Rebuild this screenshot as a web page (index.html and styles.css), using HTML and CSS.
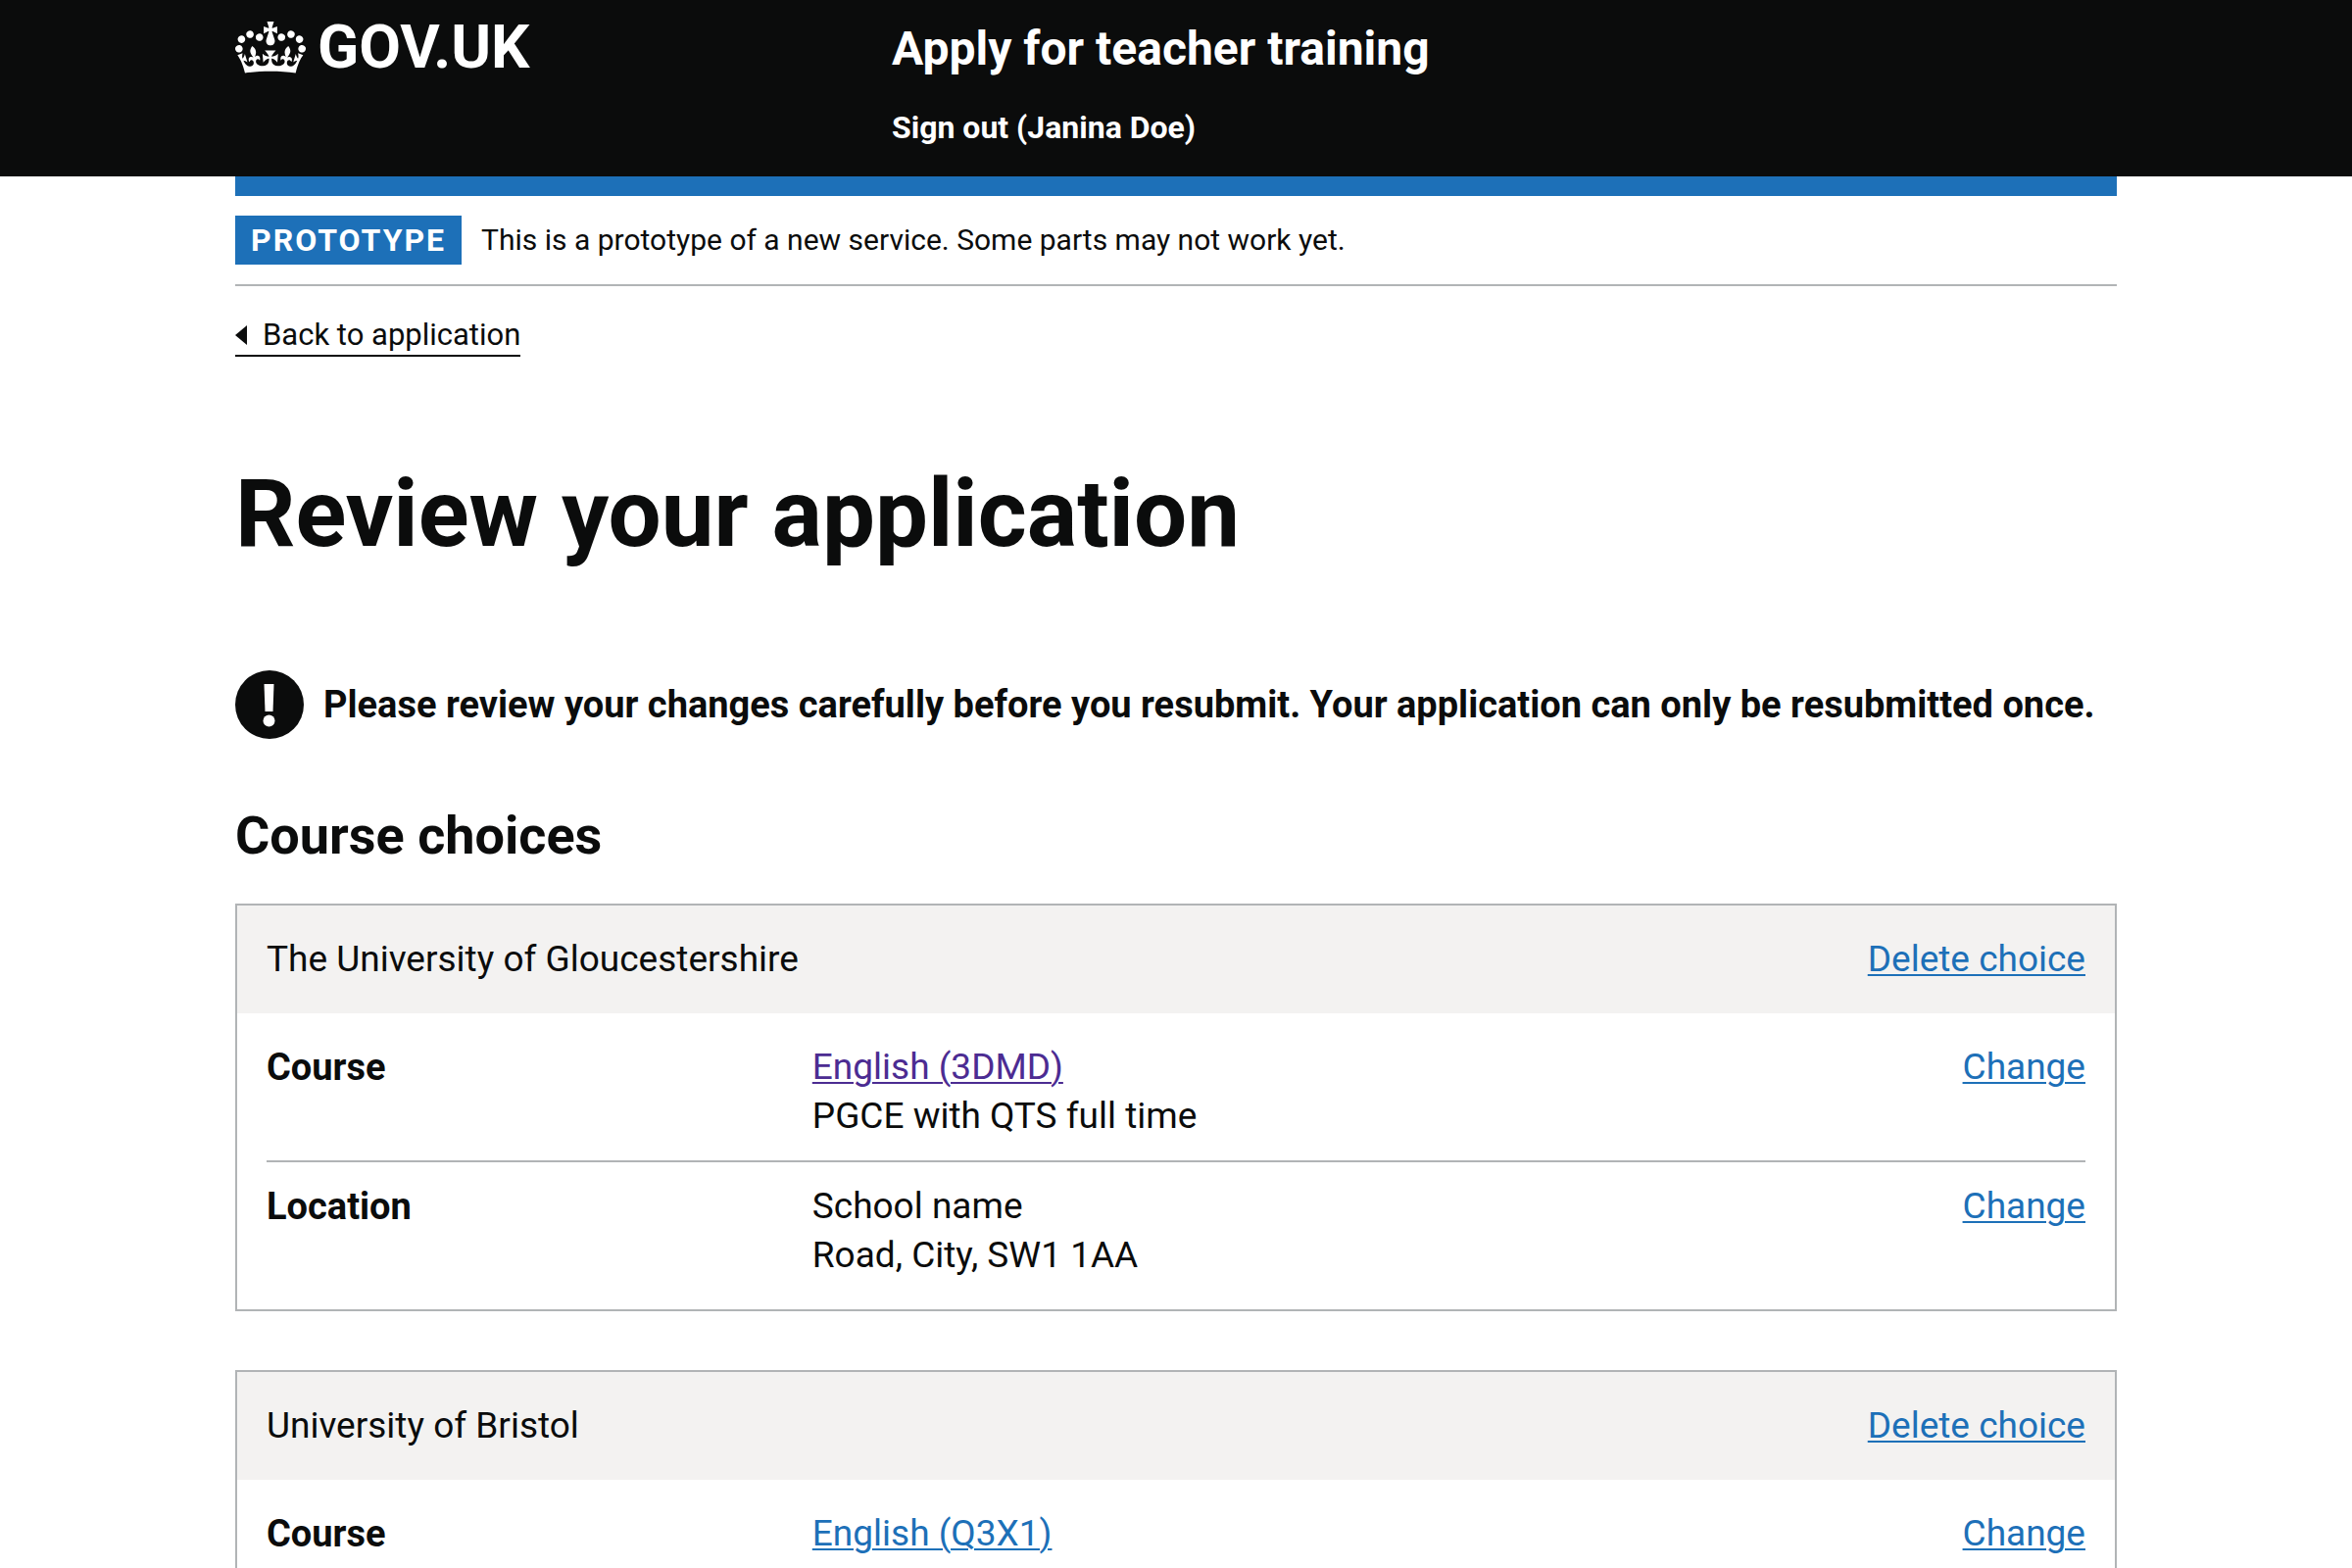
FILE: index.html
```html
<!DOCTYPE html>
<html lang="en">
<head>
  <meta charset="utf-8">
  <meta name="viewport" content="width=device-width, initial-scale=1">
  <title>Review your application – Apply for teacher training – GOV.UK</title>
  <link rel="stylesheet" href="styles.css">
</head>
<body>
  <header class="header">
    <div class="container header-grid">
      <a class="logo" href="#">
        <svg class="crown" viewBox="0 0 132 97" aria-hidden="true" focusable="false">
          <path fill="currentColor" fill-rule="evenodd" d="M25 30.2c3.5 1.5 7.7-.2 9.1-3.7 1.5-3.6-.2-7.8-3.9-9.2-3.6-1.4-7.6.3-9.1 3.9-1.4 3.5.3 7.5 3.9 9zM9 39.5c3.6 1.5 7.8-.2 9.2-3.7 1.5-3.6-.2-7.8-3.9-9.1-3.6-1.5-7.6.2-9.1 3.8-1.4 3.5.3 7.5 3.8 9zM4.4 57.2c3.5 1.5 7.7-.2 9.1-3.8 1.5-3.6-.2-7.7-3.9-9.1-3.5-1.5-7.6.3-9.1 3.8-1.4 3.5.3 7.6 3.9 9.1zm38.3-21.4c3.5 1.5 7.7-.2 9.1-3.8 1.5-3.6-.2-7.7-3.9-9.1-3.6-1.5-7.6.3-9.1 3.8-1.3 3.6.4 7.7 3.9 9.1zm64.4-5.6c-3.6 1.5-7.8-.2-9.1-3.7-1.5-3.6.2-7.8 3.8-9.2 3.6-1.4 7.7.3 9.2 3.9 1.3 3.5-.4 7.5-3.9 9zm15.9 9.3c-3.6 1.5-7.7-.2-9.1-3.7-1.5-3.6.2-7.8 3.7-9.1 3.6-1.5 7.7.2 9.2 3.8 1.5 3.5-.3 7.5-3.8 9zm4.7 17.7c-3.6 1.5-7.8-.2-9.2-3.8-1.5-3.6.2-7.7 3.9-9.1 3.6-1.5 7.7.3 9.2 3.8 1.3 3.5-.4 7.6-3.9 9.1zM89.3 35.8c-3.6 1.5-7.8-.2-9.2-3.8-1.4-3.6.2-7.7 3.9-9.1 3.6-1.5 7.7.3 9.2 3.8 1.4 3.6-.3 7.7-3.9 9.1zM69.7 17.7l8.9 4.7V9.3l-8.9 2.8c-.2-.3-.5-.6-.9-.9L72.4 0H59.6l3.5 11.2c-.3.3-.6.5-.9.9l-8.8-2.8v13.1l8.8-4.7c.3.3.6.7.9.9l-5 15.4v.1c-.2.8-.4 1.6-.4 2.4 0 4.1 3.1 7.5 7 8.1h.2c.3 0 .7.1 1 .1.4 0 .7 0 1-.1h.2c4-.6 7.1-4.1 7.1-8.1 0-.8-.1-1.7-.4-2.4V34l-5.1-15.4c.4-.2.7-.6 1-.9zM66 92.8c16.9 0 32.8 1.1 47.1 3.2 4-16.9 8.9-26.7 14-33.5l-9.6-3.4c1 4.9 1.1 7.2 0 10.2-1.5-1.4-3-4.3-4.2-8.7L108.6 76c2.8-2 5-3.2 7.5-3.3-4.4 9.4-10 11.9-13.6 11.2-4.3-.8-6.3-4.6-5.6-7.9 1-4.7 5.7-5.9 8-.5 4.3-8.7-3-11.4-7.6-8.8 7.1-7.2 7.9-13.5 2.1-21.1-8 6.1-8.1 12.3-4.5 20.8-4.7-5.4-12.1-2.5-9.5 6.2 3.4-5.2 7.9-2 7.2 3.1-.6 4.3-6.4 7.8-13.5 7.2-10.3-.9-10.9-8-11.2-13.8 2.5-.5 7.1 1.8 11 7.3L80.2 60c-4.1 4.4-8 5.3-12.3 5.4 1.4-4.4 8-11.6 8-11.6H55.5s6.4 7.2 7.9 11.6c-4.2-.1-8-1-12.3-5.4l1.4 16.4c3.9-5.5 8.5-7.7 10.9-7.3-.3 5.8-.9 12.8-11.1 13.8-7.2.6-12.9-2.9-13.5-7.2-.7-5 3.8-8.3 7.1-3.1 2.7-8.7-4.6-11.6-9.4-6.2 3.7-8.5 3.6-14.7-4.6-20.8-5.8 7.6-5 13.9 2.2 21.1-4.7-2.6-11.9.1-7.7 8.8 2.3-5.5 7.1-4.2 8.1.5.7 3.3-1.3 7.1-5.7 7.9-3.5.7-9-1.8-13.5-11.2 2.5.1 4.7 1.3 7.5 3.3l-4.7-15.4c-1.2 4.4-2.7 7.2-4.3 8.7-1.1-3-.9-5.3 0-10.2l-9.5 3.4c5 6.9 9.9 16.7 14 33.5 14.8-2.1 30.8-3.2 47.7-3.2z"/>
        </svg>
        <span class="logo-text">GOV.UK</span>
      </a>
      <div class="header-content">
        <a class="service-name" href="#">Apply for teacher training</a>
        <nav aria-label="Account">
          <a class="nav-link" href="#">Sign out (Janina Doe)</a>
        </nav>
      </div>
    </div>
  </header>

  <div class="container">
    <div class="phase-banner">
      <strong class="tag">Prototype</strong>
      <span>This is a prototype of a new service. Some parts may not work yet.</span>
    </div>
    <a class="back-link" href="#">
      <svg class="back-arrow" viewBox="0 0 12 20" aria-hidden="true"><path fill="currentColor" d="M12 0v20L0 10z"/></svg>
      Back to application
    </a>

    <main class="main">
      <h1 class="heading-xl">Review your application</h1>

      <div class="warning">
        <svg class="warning-icon" viewBox="0 0 70 70" role="img" aria-label="Warning">
          <circle cx="35" cy="35" r="35" fill="#0b0c0c"/>
          <path fill="#fff" d="M29.500 14h10l-1 28h-8z"/>
          <circle cx="34.500" cy="51.500" r="6" fill="#fff"/>
        </svg>
        <strong>Please review your changes carefully before you resubmit. Your application can only be resubmitted once.</strong>
      </div>

      <h2 class="heading-l">Course choices</h2>

      <section class="card">
        <div class="card-header">
          <h3 class="card-title">The University of Gloucestershire</h3>
          <a class="link" href="#">Delete choice</a>
        </div>
        <dl class="summary">
          <div class="row">
            <dt class="key">Course</dt>
            <dd class="value"><a class="link visited" href="#">English (3DMD)</a><br>PGCE with QTS full time</dd>
            <dd class="action"><a class="link" href="#">Change</a></dd>
          </div>
          <div class="row">
            <dt class="key">Location</dt>
            <dd class="value">School name<br>Road, City, SW1 1AA</dd>
            <dd class="action"><a class="link" href="#">Change</a></dd>
          </div>
        </dl>
      </section>

      <section class="card">
        <div class="card-header">
          <h3 class="card-title">University of Bristol</h3>
          <a class="link" href="#">Delete choice</a>
        </div>
        <dl class="summary">
          <div class="row">
            <dt class="key">Course</dt>
            <dd class="value"><a class="link" href="#">English (Q3X1)</a></dd>
            <dd class="action"><a class="link" href="#">Change</a></dd>
          </div>
        </dl>
      </section>
    </main>
  </div>
</body>
</html>
```

FILE: styles.css
```css
* {
  box-sizing: border-box;
}

body {
  margin: 0;
  background: #fff;
  color: #0b0c0c;
  font-family: Roboto, "Liberation Sans", sans-serif;
  font-size: 37px;
  line-height: 50px;
}

h1,
h2,
h3,
dl,
dd {
  margin: 0;
}

.container {
  max-width: 1980px;
  margin: 0 auto;
  padding: 0 30px;
}

.header {
  background: #0b0c0c;
  color: #fff;
}

.header a {
  color: inherit;
  text-decoration: none;
}

.header-grid {
  display: grid;
  grid-template-columns: 1fr 2fr;
  align-items: start;
  padding-top: 20px;
  padding-bottom: 30px;
}

.logo {
  display: flex;
  align-items: center;
  gap: 12px;
}

.crown {
  width: 72px;
  height: 53px;
}

.logo-text {
  font-size: 62px;
  font-weight: 700;
  line-height: 56px;
}

.header-content {
  display: flex;
  flex-direction: column;
  gap: 30px;
  padding-left: 30px;
}

.service-name {
  font-size: 48px;
  font-weight: 700;
  line-height: 60px;
}

.header-content nav {
  display: flex;
  font-size: 32px;
  font-weight: 700;
  line-height: 40px;
}

.phase-banner {
  display: flex;
  align-items: center;
  gap: 20px;
  padding: 20px 0;
  border-top: 20px solid #1d70b8;
  border-bottom: 2px solid #b1b4b6;
  font-size: 30px;
}

.tag {
  padding: 0 16px;
  background: #1d70b8;
  color: #fff;
  font-size: 32px;
  letter-spacing: 2px;
  text-transform: uppercase;
}

.back-link {
  display: flex;
  align-items: center;
  gap: 16px;
  width: fit-content;
  margin-top: 30px;
  border-bottom: 2px solid #0b0c0c;
  color: #0b0c0c;
  font-size: 31px;
  line-height: 40px;
  text-decoration: none;
}

.back-arrow {
  width: 12px;
  height: 20px;
}

.main {
  padding: 110px 0;
}

.heading-xl {
  margin-bottom: 110px;
  font-size: 96px;
  line-height: 100px;
}

.warning {
  display: flex;
  align-items: center;
  gap: 20px;
  margin-bottom: 70px;
  font-size: 38px;
}

.warning-icon {
  flex: none;
  width: 70px;
  height: 70px;
}

.heading-l {
  margin-bottom: 40px;
  font-size: 54px;
  line-height: 58px;
}

.card {
  margin-bottom: 60px;
  border: 2px solid #b1b4b6;
}

.card-header {
  display: flex;
  justify-content: space-between;
  padding: 30px;
  background: #f3f2f1;
}

.card-title {
  font-size: 37px;
  font-weight: 400;
}

.link {
  color: #1d70b8;
  text-decoration-thickness: 2px;
  text-underline-offset: 3px;
}

.visited {
  color: #4c2c92;
}

.summary {
  padding: 10px 30px;
}

.row {
  display: grid;
  grid-template-columns: 30% 50% 20%;
  padding: 20px 0;
}

.row + .row {
  border-top: 2px solid #b1b4b6;
}

.key {
  font-size: 38px;
  font-weight: 700;
}

.action {
  text-align: right;
}
```
